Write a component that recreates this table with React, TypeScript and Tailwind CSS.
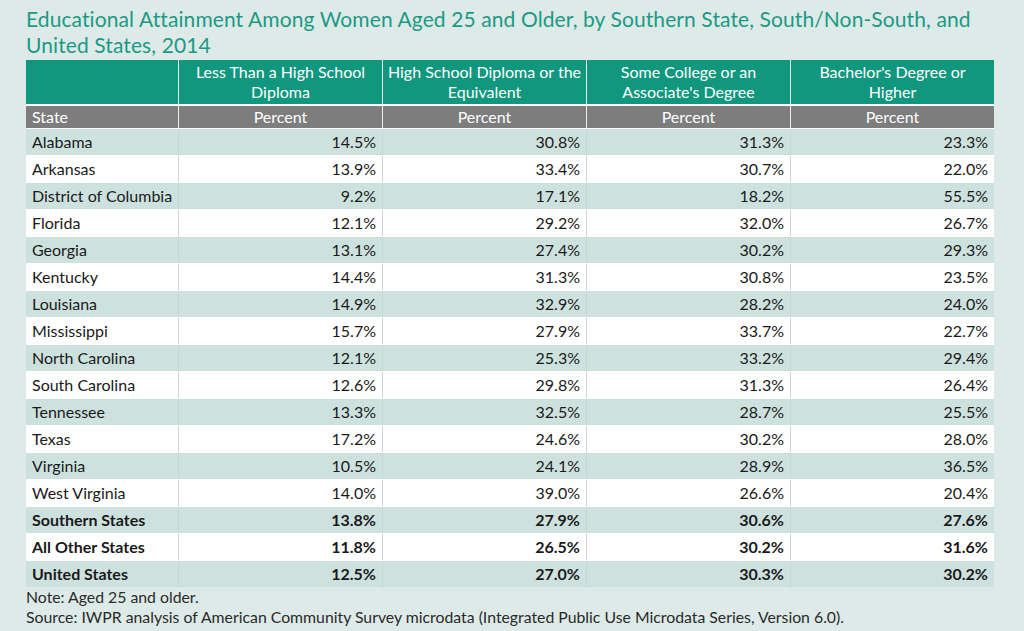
import React from "react";

const rows: [string, string, string, string, string, boolean?][] = [
  ["Alabama", "14.5%", "30.8%", "31.3%", "23.3%"],
  ["Arkansas", "13.9%", "33.4%", "30.7%", "22.0%"],
  ["District of Columbia", "9.2%", "17.1%", "18.2%", "55.5%"],
  ["Florida", "12.1%", "29.2%", "32.0%", "26.7%"],
  ["Georgia", "13.1%", "27.4%", "30.2%", "29.3%"],
  ["Kentucky", "14.4%", "31.3%", "30.8%", "23.5%"],
  ["Louisiana", "14.9%", "32.9%", "28.2%", "24.0%"],
  ["Mississippi", "15.7%", "27.9%", "33.7%", "22.7%"],
  ["North Carolina", "12.1%", "25.3%", "33.2%", "29.4%"],
  ["South Carolina", "12.6%", "29.8%", "31.3%", "26.4%"],
  ["Tennessee", "13.3%", "32.5%", "28.7%", "25.5%"],
  ["Texas", "17.2%", "24.6%", "30.2%", "28.0%"],
  ["Virginia", "10.5%", "24.1%", "28.9%", "36.5%"],
  ["West Virginia", "14.0%", "39.0%", "26.6%", "20.4%"],
  ["Southern States", "13.8%", "27.9%", "30.6%", "27.6%", true],
  ["All Other States", "11.8%", "26.5%", "30.2%", "31.6%", true],
  ["United States", "12.5%", "27.0%", "30.3%", "30.2%", true],
];

const cols = "grid grid-cols-[152px_203px_203px_203px_203px] gap-x-[1px]";

export default function App() {
  return (
    <div
      className="w-[1024px] h-[631px] bg-[#deeae8] overflow-hidden pl-[26px] pt-[6px]"
      style={{ fontFamily: "Lato, 'Open Sans', sans-serif" }}
    >
      <div className="text-[21px] leading-[26px] text-[#1a9a85] pr-[40px] tracking-[0.1px]">
        Educational Attainment Among Women Aged 25 and Older, by Southern State, South/Non-South, and United States, 2014
      </div>
      <div className="w-[968px] mt-[2px] bg-[#ffffff]">
        <div className={`${cols} bg-[#e9efee]`}>
          <div className="bg-[#10977e] h-[44px]" />
          {[
            "Less Than a High School Diploma",
            "High School Diploma or the Equivalent",
            "Some College or an Associate's Degree",
            "Bachelor's Degree or Higher",
          ].map((h) => (
            <div
              key={h}
              className="bg-[#10977e] h-[44px] text-white text-[16px] leading-[20px] text-center flex items-center justify-center px-[3px]"
            >
              <span className={h.startsWith("Some") ? "px-[26px]" : h.startsWith("Bach") ? "px-[18px]" : h.startsWith("Less") ? "px-[10px]" : ""}>{h}</span>
            </div>
          ))}
        </div>
        <div className={`${cols} bg-[#e9efee] mt-[2px]`}>
          <div className="bg-[#7d7d7d] h-[22px] text-white text-[16px] leading-[22px] pl-[6px]">State</div>
          {[0, 1, 2, 3].map((i) => (
            <div key={i} className="bg-[#7d7d7d] h-[22px] text-white text-[16px] leading-[22px] text-center">
              Percent
            </div>
          ))}
        </div>
        {rows.map((r, i) => {
          const bg = i % 2 === 0 ? "bg-[#cde2de]" : "bg-white";
          const bold = r[5] ? "font-bold" : "";
          return (
            <div key={r[0]} className={`${cols} bg-[#c9d6d4] mt-[1px]`}>
              <div className={`${bg} ${bold} h-[26px] text-[16px] leading-[26px] text-[#1a1a1a] pl-[6px]`}>{r[0]}</div>
              {[1, 2, 3, 4].map((c) => (
                <div
                  key={c}
                  className={`${bg} ${bold} h-[26px] text-[16px] leading-[26px] text-[#1a1a1a] text-right pr-[6px]`}
                >
                  {r[c] as string}
                </div>
              ))}
            </div>
          );
        })}
      </div>
      <div className="text-[15.8px] leading-[20px] text-[#2a2a2a] mt-[0px]">
        <div>Note: Aged 25 and older.</div>
        <div>Source: IWPR analysis of American Community Survey microdata (Integrated Public Use Microdata Series, Version 6.0).</div>
      </div>
    </div>
  );
}
